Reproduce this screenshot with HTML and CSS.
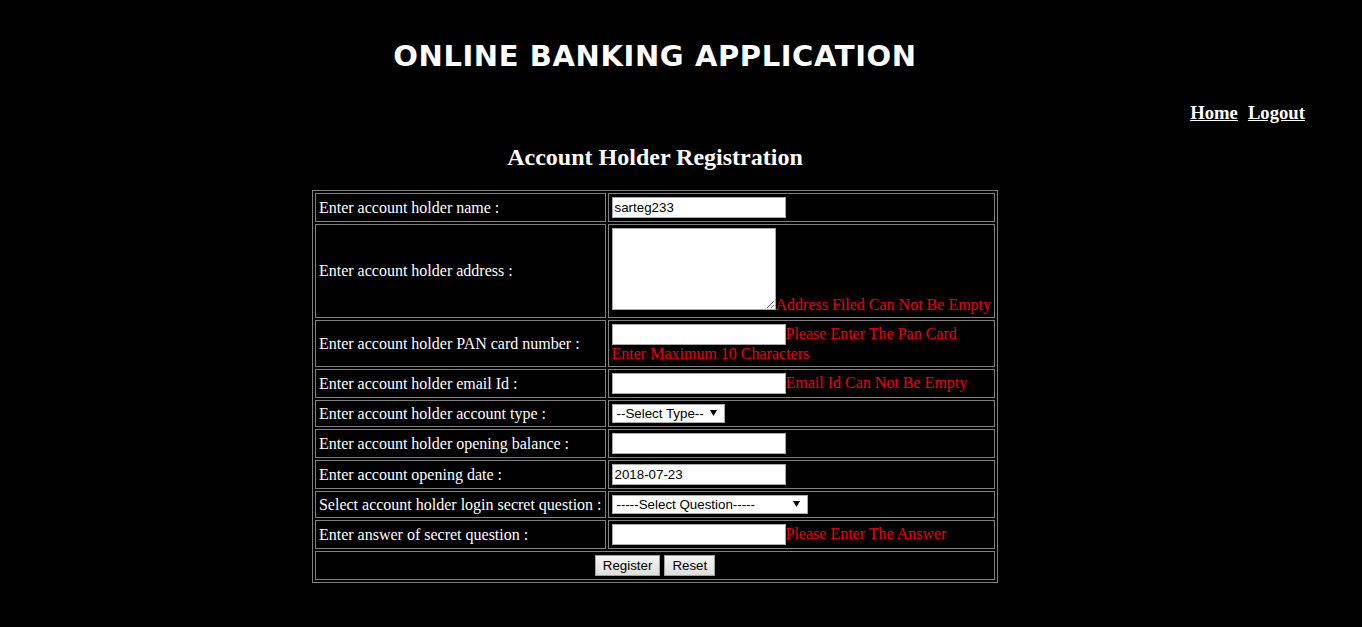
FILE: index.html
```html
<!DOCTYPE html>
<html>
<head>
<meta charset="utf-8">
<title>Online Banking Application</title>
<link rel="stylesheet" href="styles.css">
</head>
<body>
<div class="page">
  <h1 class="brand">ONLINE BANKING APPLICATION</h1>
  <div class="nav"><a href="#">Home</a><a href="#">Logout</a></div>
  <h2 class="title">Account Holder Registration</h2>
  <table class="form-table">
    <tr>
      <td class="label">Enter account holder name :</td>
      <td class="field"><input class="txt" type="text" value="sarteg233"></td>
    </tr>
    <tr>
      <td class="label">Enter account holder address :</td>
      <td class="field"><textarea class="area"></textarea><span class="err">Address Filed Can Not Be Empty</span></td>
    </tr>
    <tr>
      <td class="label">Enter account holder PAN card number :</td>
      <td class="field"><input class="txt" type="text"><span class="err">Please Enter The Pan Card</span><br><span class="err">Enter Maximum 10 Characters</span></td>
    </tr>
    <tr>
      <td class="label">Enter account holder email Id :</td>
      <td class="field"><input class="txt" type="text"><span class="err">Email Id Can Not Be Empty</span></td>
    </tr>
    <tr>
      <td class="label">Enter account holder account type :</td>
      <td class="field"><span class="sel sel-type"><select><option>--Select Type--</option></select><svg class="arrow" width="7" height="6" viewBox="0 0 7 6"><path d="M0 0H7L3.5 6Z" fill="#000"/></svg></span></td>
    </tr>
    <tr>
      <td class="label">Enter account holder opening balance :</td>
      <td class="field"><input class="txt" type="text"></td>
    </tr>
    <tr>
      <td class="label">Enter account opening date :</td>
      <td class="field"><input class="txt" type="text" value="2018-07-23"></td>
    </tr>
    <tr>
      <td class="label">Select account holder login secret question :</td>
      <td class="field"><span class="sel sel-q"><select><option>-----Select Question-----</option></select><svg class="arrow" width="7" height="6" viewBox="0 0 7 6"><path d="M0 0H7L3.5 6Z" fill="#000"/></svg></span></td>
    </tr>
    <tr>
      <td class="label">Enter answer of secret question :</td>
      <td class="field"><input class="txt" type="text"><span class="err">Please Enter The Answer</span></td>
    </tr>
    <tr>
      <td class="actions" colspan="2"><button class="btn" type="button">Register</button> <button class="btn" type="button">Reset</button></td>
    </tr>
  </table>
</div>
</body>
</html>
```
FILE: styles.css
```css
html, body {
  margin: 0;
  padding: 0;
  background: #000;
  color: #fff;
  font-family: "Liberation Serif", "Times New Roman", serif;
  font-size: 16px;
}
.page {
  width: 1310px;
  padding-top: 39px;
}
.brand {
  margin: 0;
  text-align: center;
  font-family: "DejaVu Sans", sans-serif;
  font-weight: bold;
  font-size: 29px;
  line-height: 34px;
  letter-spacing: 0.6px;
  color: #fff;
}
.nav {
  margin-top: 29px;
  text-align: right;
  padding-right: 5px;
  font-weight: bold;
  font-size: 18.7px;
  line-height: 22px;
}
.nav a {
  color: #fff;
  text-decoration: underline;
  margin-left: 10px;
}
.title {
  margin: 19px 0 0 0;
  text-align: center;
  font-size: 24px;
  line-height: 28px;
  font-weight: bold;
}
.form-table {
  margin: 19px auto 0 auto;
  border: 1px solid #808080;
  border-spacing: 2px;
  border-collapse: separate;
}
.form-table td {
  border: 1px solid #808080;
  padding: 3px;
  vertical-align: middle;
  white-space: nowrap;
}
.label {
  color: #fff;
}
.txt {
  box-sizing: border-box;
  width: 174px;
  height: 21px;
  margin: 0;
  padding: 1px 2px;
  border: 1px solid #a9a9a9;
  background: #fff;
  color: #000;
  font-family: "Liberation Sans", Arial, sans-serif;
  font-size: 13.33px;
  vertical-align: baseline;
}
.area {
  box-sizing: border-box;
  width: 164px;
  height: 82px;
  margin: 0;
  padding: 2px;
  border: 1px solid #a9a9a9;
  background: #fff;
  resize: both;
  vertical-align: baseline;
}
.err {
  color: #e8000d;
}
.sel {
  position: relative;
  display: inline-block;
  vertical-align: baseline;
}
.sel select {
  -webkit-appearance: none;
  appearance: none;
  box-sizing: border-box;
  height: 19px;
  margin: 0;
  padding: 0 0 0 4px;
  border: 1px solid #a9a9a9;
  border-radius: 0;
  background: #fff;
  color: #000;
  font-family: "Liberation Sans", Arial, sans-serif;
  font-size: 13.33px;
}
.sel-type select { width: 113px; }
.sel-q select { width: 196px; }
.arrow {
  position: absolute;
  top: 6px;
  right: 8px;
}
.actions {
  text-align: center;
}
.btn {
  box-sizing: border-box;
  height: 21px;
  margin: 0;
  padding: 1px 7px;
  border: 1px solid #a0a0a0;
  border-radius: 0;
  background: linear-gradient(#f6f6f6, #dddddd);
  color: #000;
  font-family: "Liberation Sans", Arial, sans-serif;
  font-size: 13.33px;
}
```
